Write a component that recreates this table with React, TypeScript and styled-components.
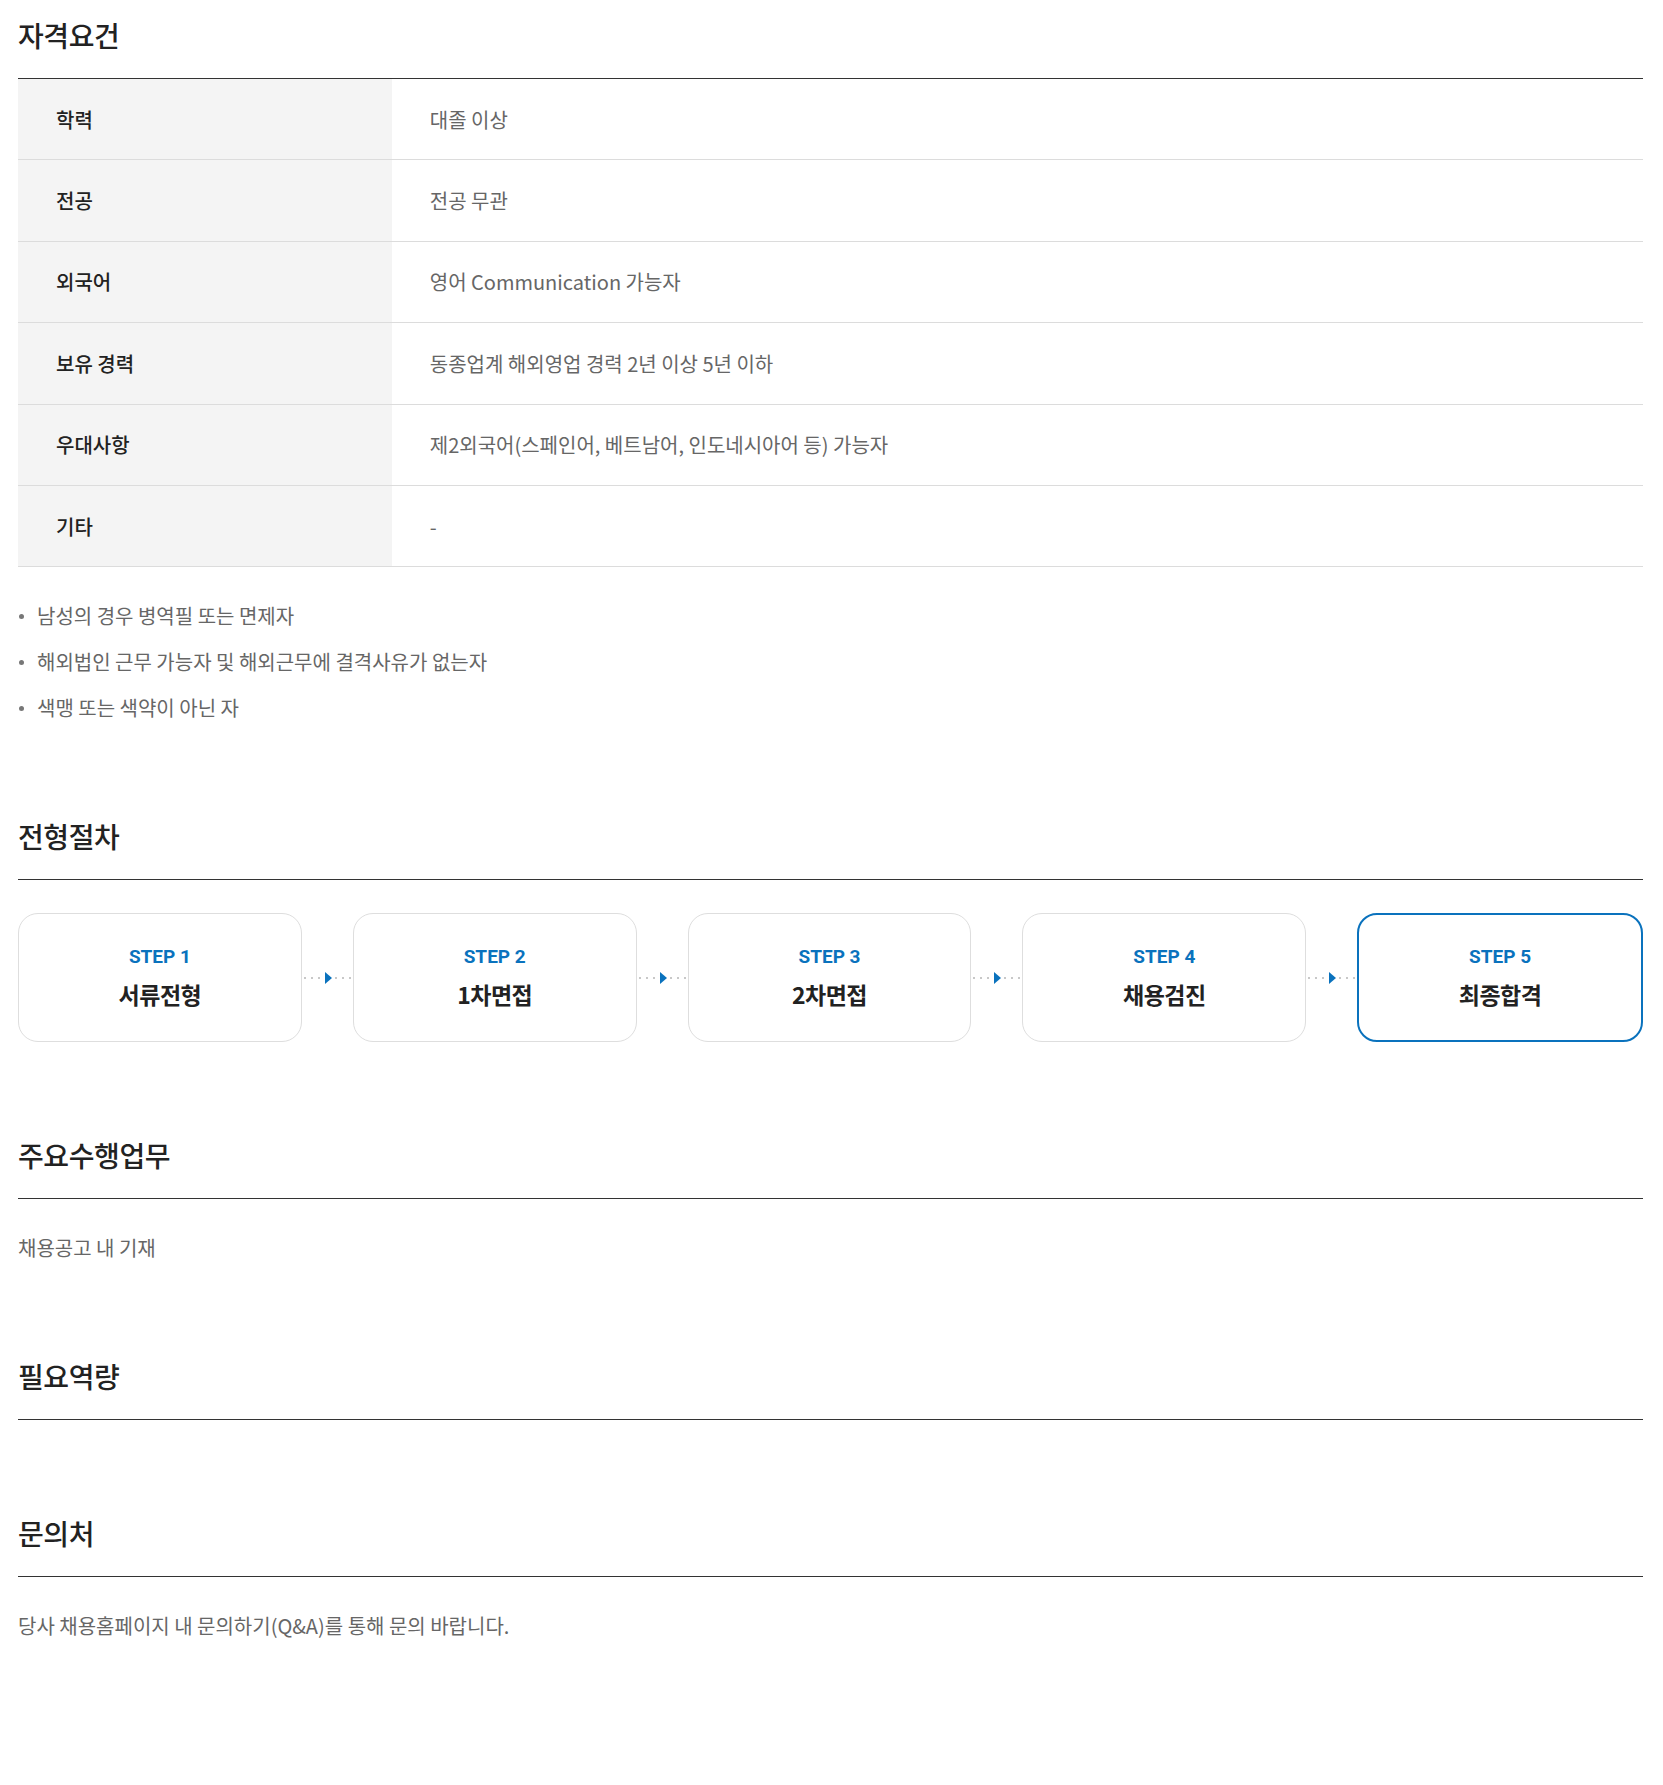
import React from "react";
import styled, { createGlobalStyle } from "styled-components";

const GlobalStyle = createGlobalStyle`
	html, body {
		margin: 0;
		padding: 0;
		background: #fff;
	}
	body {
		font-family: "Noto Sans CJK KR", "Noto Sans", sans-serif;
		color: #222;
	}
	* {
		box-sizing: border-box;
	}
`;

const BLUE = "#0a72bd";

const Page = styled.div`
	padding: 17px 20px 80px 18px;
`;

const Section = styled.section`
	& + & {
		margin-top: 95px;
	}
`;

const Title = styled.h2`
	margin: 0;
	font-size: 28px;
	font-weight: 500;
	line-height: 36px;
	letter-spacing: -0.4px;
	color: #222;
	padding-bottom: 25px;
	border-bottom: 1px solid #333;
`;

const InfoTable = styled.div`
	display: flex;
	flex-direction: column;
`;

const InfoRow = styled.div`
	display: grid;
	grid-template-columns: 23% 1fr;
	height: 81.4px;
	border-bottom: 1px solid #dcdcdc;
`;

const InfoLabel = styled.div`
	display: flex;
	align-items: center;
	padding: 0 38px;
	background: #f4f4f4;
	font-size: 20px;
	font-weight: 500;
	color: #222;
`;

const InfoValue = styled.div`
	display: flex;
	align-items: center;
	padding: 0 38px;
	font-size: 20px;
	font-weight: 400;
	color: #666;
`;

const BulletList = styled.ul`
	list-style: none;
	margin: 34px 0 0;
	padding: 0;
`;

const BulletItem = styled.li`
	position: relative;
	padding-left: 19px;
	font-size: 20px;
	line-height: 30px;
	color: #666;

	& + & {
		margin-top: 16px;
	}

	&::before {
		content: "";
		position: absolute;
		left: 1px;
		top: 13px;
		width: 5px;
		height: 5px;
		border-radius: 50%;
		background: #777;
	}
`;

const BodyText = styled.p`
	margin: 34px 0 0;
	font-size: 20px;
	line-height: 30px;
	color: #666;
`;

const Steps = styled.div`
	display: flex;
	margin-top: 33px;
`;

const StepBox = styled.div<{ $active?: boolean }>`
	flex: 1;
	height: 129px;
	display: flex;
	flex-direction: column;
	align-items: center;
	justify-content: center;
	padding-bottom: 2px;
	border-radius: 20px;
	border: ${(p) => (p.$active ? `2px solid ${BLUE}` : "1px solid #dedede")};
	background: #fff;
`;

const StepNum = styled.div`
	font-family: Roboto, "Noto Sans", sans-serif;
	font-size: 19px;
	font-weight: 700;
	line-height: 24px;
	color: ${BLUE};
`;

const StepName = styled.div`
	margin-top: 10px;
	font-size: 23px;
	font-weight: 700;
	line-height: 30px;
	letter-spacing: -0.5px;
	color: #222;
`;

const Connector = styled.div`
	width: 51px;
	flex: none;
	display: flex;
	align-items: center;
	justify-content: center;
`;

const Arrow = () => (
	<svg width="51" height="14" viewBox="0 0 51 14">
		{[3, 10, 17, 34, 41, 48].map((x) => (
			<rect key={x} x={x - 1} y={6} width={2} height={2} fill="#c8c8c8" />
		))}
		<polygon points="23,1 30,7 23,13" fill={BLUE} />
	</svg>
);

const rows = [
	["학력", "대졸 이상"],
	["전공", "전공 무관"],
	["외국어", "영어 Communication 가능자"],
	["보유 경력", "동종업계 해외영업 경력 2년 이상 5년 이하"],
	["우대사항", "제2외국어(스페인어, 베트남어, 인도네시아어 등) 가능자"],
	["기타", "-"],
];

const notes = [
	"남성의 경우 병역필 또는 면제자",
	"해외법인 근무 가능자 및 해외근무에 결격사유가 없는자",
	"색맹 또는 색약이 아닌 자",
];

const steps = ["서류전형", "1차면접", "2차면접", "채용검진", "최종합격"];

function App() {
	return (
		<Page>
			<GlobalStyle />
			<Section>
				<Title>자격요건</Title>
				<InfoTable>
					{rows.map(([label, value]) => (
						<InfoRow key={label}>
							<InfoLabel>{label}</InfoLabel>
							<InfoValue>{value}</InfoValue>
						</InfoRow>
					))}
				</InfoTable>
				<BulletList>
					{notes.map((n) => (
						<BulletItem key={n}>{n}</BulletItem>
					))}
				</BulletList>
			</Section>

			<Section>
				<Title>전형절차</Title>
				<Steps>
					{steps.map((name, i) => (
						<React.Fragment key={name}>
							{i > 0 && (
								<Connector>
									<Arrow />
								</Connector>
							)}
							<StepBox $active={i === steps.length - 1}>
								<StepNum>STEP {i + 1}</StepNum>
								<StepName>{name}</StepName>
							</StepBox>
						</React.Fragment>
					))}
				</Steps>
			</Section>

			<Section>
				<Title>주요수행업무</Title>
				<BodyText>채용공고 내 기재</BodyText>
			</Section>

			<Section>
				<Title>필요역량</Title>
			</Section>

			<Section>
				<Title>문의처</Title>
				<BodyText>당사 채용홈페이지 내 문의하기(Q&amp;A)를 통해 문의 바랍니다.</BodyText>
			</Section>
		</Page>
	);
}

export default App;
